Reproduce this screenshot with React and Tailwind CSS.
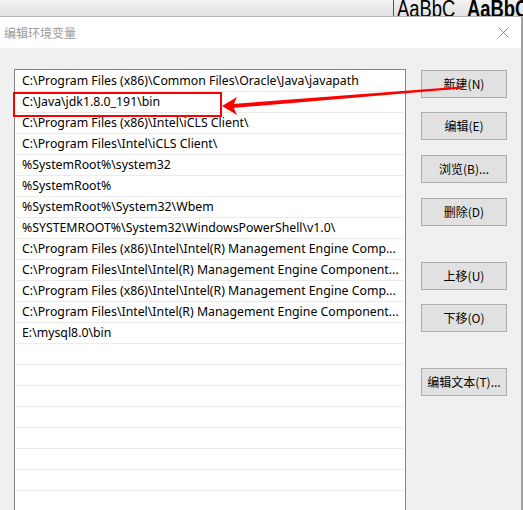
import React from "react";

const rows = [
  "C:\\Program Files (x86)\\Common Files\\Oracle\\Java\\javapath",
  "C:\\Java\\jdk1.8.0_191\\bin",
  "C:\\Program Files (x86)\\Intel\\iCLS Client\\",
  "C:\\Program Files\\Intel\\iCLS Client\\",
  "%SystemRoot%\\system32",
  "%SystemRoot%",
  "%SystemRoot%\\System32\\Wbem",
  "%SYSTEMROOT%\\System32\\WindowsPowerShell\\v1.0\\",
  "C:\\Program Files (x86)\\Intel\\Intel(R) Management Engine Comp...",
  "C:\\Program Files\\Intel\\Intel(R) Management Engine Component...",
  "C:\\Program Files (x86)\\Intel\\Intel(R) Management Engine Comp...",
  "C:\\Program Files\\Intel\\Intel(R) Management Engine Component...",
  "E:\\mysql8.0\\bin",
  "", "", "", "", "", "", "", "",
];

function Btn({ children, className = "" }) {
  return (
    <div
      className={
        "w-[86px] h-[28px] shrink-0 flex items-center justify-center bg-[#e1e1e1] border border-[#adadad] text-[12px] text-black " +
        className
      }
    >
      {children}
    </div>
  );
}

export default function App() {
  return (
    <div
      className="w-[523px] h-[510px] overflow-hidden relative bg-[#f0f0f0] flex flex-col"
      style={{ fontFamily: '"Noto Sans", "Noto Sans CJK SC", sans-serif' }}
    >
      {/* top strip of background window */}
      <div className="h-[17px] shrink-0 bg-gradient-to-b from-[#f2f2f2] to-[#e2e2e2] border-b border-[#b4b4b4] flex overflow-hidden">
        <div className="w-[393px] shrink-0" />
        <div className="w-[1px] shrink-0 bg-[#555555] h-full" />
        <div
          className="w-[73px] shrink-0 pl-[3px] overflow-hidden"
          style={{ fontFamily: '"Liberation Sans", sans-serif' }}
        >
          <div className="text-[23px] leading-none -mt-[2px] text-black whitespace-nowrap scale-x-[0.8] origin-left">
            AaBbC
          </div>
        </div>
        <div
          className="flex-1 overflow-hidden"
          style={{ fontFamily: '"Liberation Sans", sans-serif' }}
        >
          <div className="text-[23px] leading-none -mt-[2px] font-bold text-black whitespace-nowrap scale-x-[0.8] origin-left">
            AaBbC
          </div>
        </div>
      </div>

      <div className="flex flex-1 min-h-0">
        <div className="flex-1 flex flex-col min-h-0">
          {/* title bar */}
          <div className="h-[31px] shrink-0 bg-white flex items-center justify-between pl-[4px] pr-[12px]">
            <span
              className="text-[12px] text-[#9a9a9a]"
              style={{ fontFamily: '"Noto Sans CJK SC", sans-serif' }}
            >
              编辑环境变量
            </span>
            <svg width="11" height="11" viewBox="0 0 11 11">
              <path d="M0.5 0.5 L10.5 10.5 M10.5 0.5 L0.5 10.5" stroke="#8a8a8a" strokeWidth="1" />
            </svg>
          </div>

          {/* body */}
          <div className="flex-1 min-h-0 flex items-start pt-[21px] pl-[14px]">
            <div className="w-[392px] h-[460px] shrink-0 bg-white border border-[#828790] pt-[1px] overflow-hidden">
              {rows.map((r, i) => (
                <div
                  key={i}
                  className="mx-[1px] h-[21px] border-b border-[#ebebeb] pl-[6px] text-[12.3px] leading-[20px] text-black whitespace-nowrap overflow-hidden"
                >
                  {r}
                </div>
              ))}
            </div>
            <div
              className="ml-[15px] mt-[1px] flex flex-col shrink-0"
              style={{ fontFamily: '"Noto Sans CJK SC", "Noto Sans", sans-serif' }}
            >
              <Btn>新建(N)</Btn>
              <Btn className="mt-[14px]">编辑(E)</Btn>
              <Btn className="mt-[15px]">浏览(B)...</Btn>
              <Btn className="mt-[15px]">删除(D)</Btn>
              <Btn className="mt-[36px]">上移(U)</Btn>
              <Btn className="mt-[14px]">下移(O)</Btn>
              <Btn className="mt-[36px]">编辑文本(T)...</Btn>
            </div>
          </div>
        </div>
        <div className="w-[2px] shrink-0 bg-[#a0a0a0]" />
      </div>

      {/* red highlight box */}
      <div className="absolute left-[13px] top-[92px] w-[209px] h-[25px] border-2 border-[#ff0000]" />

      {/* red arrow */}
      <svg className="absolute left-0 top-0 pointer-events-none" width="523" height="510">
        <polygon points="232,104 462,86.5 462,88.5 232,108" fill="#ff0000" />
        <polygon points="222,106 237,97 233,106 237,115" fill="#ff0000" />
      </svg>
    </div>
  );
}
